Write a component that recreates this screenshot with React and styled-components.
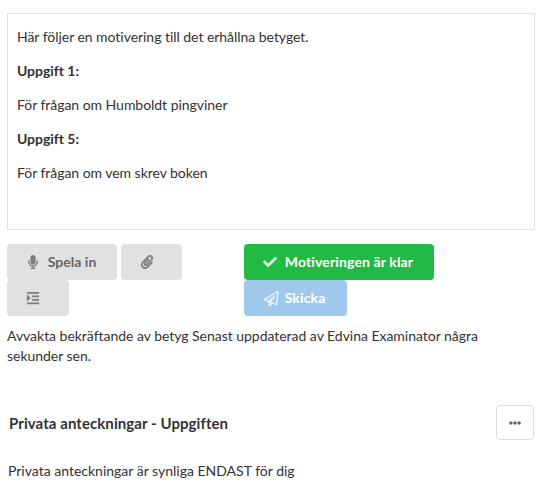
import React from "react";
import styled, { createGlobalStyle } from "styled-components";
import { FaMicrophone, FaPaperclip, FaCheck, FaRegPaperPlane, FaIndent, FaEllipsisH } from "react-icons/fa";

const Global = createGlobalStyle`
  html, body { margin: 0; padding: 0; background: #fff; }
  body { font-family: Lato, "Liberation Sans", sans-serif; font-size: 14px; line-height: 20px; color: #333; }
`;
const Page = styled.div`
  width: 554px; height: 486px; overflow: hidden; box-sizing: border-box;
  padding: 13px 19px 0 7px;
`;
const Editor = styled.div`
  box-sizing: border-box; height: 217px; border: 1px solid #e0e0e0;
  padding: 13.4px 9px 0 9px;
`;
const Para = styled.p`
  margin: 0 0 14px; color: #333; letter-spacing: -0.04px;
`;
const Strong = styled.strong`font-weight: 700;`;
const Toolbar = styled.div`
  display: grid; grid-template-columns: 237px 1fr; margin-top: 14px;
`;
const Group = styled.div`
  display: flex; flex-wrap: wrap; align-content: flex-start; column-gap: 4px;
`;
const Button = styled.button`
  box-sizing: border-box; height: 36px; width: ${p => p.$w}px; border: 0; border-radius: 4px;
  padding: 0 ${p => p.$pr || 0}px 0 0;
  display: inline-flex; align-items: center; justify-content: center; gap: ${p => p.$gap || 0}px;
  background: ${p => p.$bg}; color: ${p => p.$fg};
  font: 700 14px/1 Lato, "Liberation Sans", sans-serif; letter-spacing: ${p => p.$ls ?? 0.13}px;
  svg { flex: none; font-size: ${p => p.$icon || 14}px; opacity: 0.8; }
`;
const Status = styled.p`margin: 10px 0 0; color: #333; width: 500px; letter-spacing: -0.03px;`;
const Header = styled.div`
  display: flex; align-items: center; justify-content: space-between;
  margin-top: 39px; padding-left: 2px; margin-right: 1px;
`;
const Title = styled.h3`margin: 0; font: 700 15px/20px Lato, "Liberation Sans", sans-serif; letter-spacing: 0.07px; color: #333;`;
const MenuButton = styled.button`
  box-sizing: border-box; width: 38px; height: 35px; background: #fff; padding: 0;
  border: 1px solid #dcdcdc; border-radius: 4px; color: #666;
  display: flex; align-items: center; justify-content: center; font-size: 12px;
`;
const Note = styled.p`margin: 21px 0 0; color: #333; padding-left: 1px;`;

const gray = { $bg: "#e0e1e2", $fg: "#666" };

export default function App() {
  return (
    <>
      <Global />
      <Page>
        <Editor>
          <Para>Här följer en motivering till det erhållna betyget.</Para>
          <Para><Strong>Uppgift 1:</Strong></Para>
          <Para>För frågan om Humboldt pingviner</Para>
          <Para><Strong>Uppgift 5:</Strong></Para>
          <Para>För frågan om vem skrev boken</Para>
        </Editor>
        <Toolbar>
          <Group>
            <Button {...gray} $w={110} $gap={8} $ls={0.04} $pr={2}><FaMicrophone />Spela in</Button>
            <Button {...gray} $w={61} $pr={9}><FaPaperclip /></Button>
            <Button {...gray} $w={62} $pr={10}><FaIndent /></Button>
          </Group>
          <Group>
            <Button $bg="#21ba45" $fg="#fff" $w={190} $gap={8} $icon={14} $pr={2}><FaCheck />Motiveringen är klar</Button>
            <Button $bg="#9fc9ec" $fg="#fff" $w={103} $gap={6} $icon={15} $pr={2}><FaRegPaperPlane />Skicka</Button>
          </Group>
        </Toolbar>
        <Status>Avvakta bekräftande av betyg Senast uppdaterad av Edvina Examinator några sekunder sen.</Status>
        <Header>
          <Title>Privata anteckningar - Uppgiften</Title>
          <MenuButton><FaEllipsisH /></MenuButton>
        </Header>
        <Note>Privata anteckningar är synliga ENDAST för dig</Note>
      </Page>
    </>
  );
}
